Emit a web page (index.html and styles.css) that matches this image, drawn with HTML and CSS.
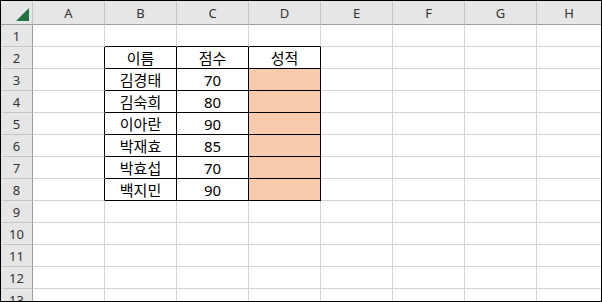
FILE: index.html
```html
<!DOCTYPE html>
<html>
<head>
    <meta charset="UTF-8">
    <title>성적표</title>
    <link rel="stylesheet" href="styles.css">
</head>
<body>
    <div class="sheet">
        <table class="grid">
            <colgroup>
                <col class="c-head">
                <col class="c-col"><col class="c-col"><col class="c-col"><col class="c-col">
                <col class="c-col"><col class="c-col"><col class="c-col"><col class="c-last">
            </colgroup>
            <thead>
                <tr>
                    <th class="corner">
                        <svg width="14" height="14" viewBox="0 0 14 14"><polygon points="0,13 13,13 13,0" fill="#217346"/></svg>
                    </th>
                    <th>A</th><th>B</th><th>C</th><th>D</th><th>E</th><th>F</th><th>G</th><th>H</th>
                </tr>
            </thead>
            <tbody>
                <tr><th>1</th><td></td><td class="above"></td><td class="above"></td><td class="above"></td><td></td><td></td><td></td><td></td></tr>
                <tr><th>2</th><td class="left-of"></td><td class="box">이름</td><td class="box">점수</td><td class="box">성적</td><td></td><td></td><td></td><td></td></tr>
                <tr><th>3</th><td class="left-of"></td><td class="box">김경태</td><td class="box">70</td><td class="box grade"></td><td></td><td></td><td></td><td></td></tr>
                <tr><th>4</th><td class="left-of"></td><td class="box">김숙희</td><td class="box">80</td><td class="box grade"></td><td></td><td></td><td></td><td></td></tr>
                <tr><th>5</th><td class="left-of"></td><td class="box">이아란</td><td class="box">90</td><td class="box grade"></td><td></td><td></td><td></td><td></td></tr>
                <tr><th>6</th><td class="left-of"></td><td class="box">박재효</td><td class="box">85</td><td class="box grade"></td><td></td><td></td><td></td><td></td></tr>
                <tr><th>7</th><td class="left-of"></td><td class="box">박효섭</td><td class="box">70</td><td class="box grade"></td><td></td><td></td><td></td><td></td></tr>
                <tr><th>8</th><td class="left-of"></td><td class="box">백지민</td><td class="box">90</td><td class="box grade"></td><td></td><td></td><td></td><td></td></tr>
                <tr><th>9</th><td></td><td></td><td></td><td></td><td></td><td></td><td></td><td></td></tr>
                <tr><th>10</th><td></td><td></td><td></td><td></td><td></td><td></td><td></td><td></td></tr>
                <tr><th>11</th><td></td><td></td><td></td><td></td><td></td><td></td><td></td><td></td></tr>
                <tr><th>12</th><td></td><td></td><td></td><td></td><td></td><td></td><td></td><td></td></tr>
                <tr><th>13</th><td></td><td></td><td></td><td></td><td></td><td></td><td></td><td></td></tr>
            </tbody>
        </table>
    </div>
</body>
</html>
```

FILE: styles.css
```css
body {
    margin: 0;
    padding: 0;
    background: #fff;
    font-family: 'Noto Sans', 'Noto Sans CJK KR', sans-serif;
    overflow: hidden;
}
.sheet {
    width: 600px;
    height: 300px;
    border: 1px solid #000;
    overflow: hidden;
    background: #fff;
}
.grid {
    border-collapse: separate;
    border-spacing: 0;
    table-layout: fixed;
    width: 600px;
}
.c-head { width: 32px; }
.c-col { width: 72px; }
.c-last { width: 64px; }

th, td {
    box-sizing: border-box;
    padding: 0;
    border-right: 1px solid #d4d4d4;
    border-bottom: 1px solid #d4d4d4;
    text-align: center;
    white-space: nowrap;
    overflow: hidden;
}
thead th {
    height: 24px;
    background: #e6e6e6;
    color: #333;
    font-size: 13px;
    font-weight: 400;
    border-right-color: #c6c6c6;
    border-bottom-color: #9e9e9e;
    vertical-align: middle;
}
thead th:last-child {
    border-right: none;
}
.corner {
    text-align: right;
    vertical-align: bottom;
    padding: 0 2px 2px 0;
    line-height: 0;
}
tbody th {
    height: 22px;
    background: #e6e6e6;
    color: #333;
    font-size: 13px;
    font-weight: 400;
    border-right-color: #9e9e9e;
    border-bottom-color: #c6c6c6;
    vertical-align: middle;
}
td {
    height: 22px;
    font-size: 15px;
    color: #000;
    vertical-align: bottom;
    line-height: 20px;
}
td:last-child {
    border-right: none;
}

/* black border box B2:D8 */
.box {
    border-right-color: #000;
    border-bottom-color: #000;
}
.above {
    border-bottom-color: #000;
}
.left-of {
    border-right-color: #000;
}
.grade {
    background: #f8cbad;
}
```
